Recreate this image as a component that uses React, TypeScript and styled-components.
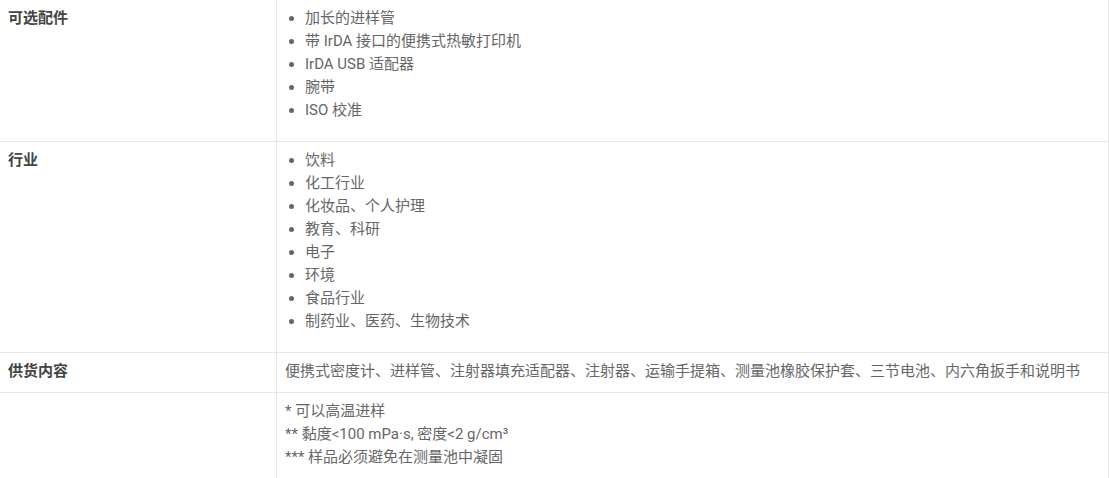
import React from "react";
import styled, { createGlobalStyle } from "styled-components";

const Global = createGlobalStyle`
  html, body { margin: 0; padding: 0; background: #fff; }
  body { font-family: Roboto, "Noto Sans CJK SC", sans-serif; font-size: 15px; color: #666; }
`;

const Table = styled.div`
  width: 1109px;
  box-sizing: border-box;
  border-right: 1px solid #e6e6e6;
`;

const Row = styled.div`
  display: grid;
  grid-template-columns: 276px 1fr;
  border-bottom: 1px solid #e6e6e6;
  &:last-child { border-bottom: none; }
`;

const Label = styled.div`
  padding: 7px 8px 9px;
  font-weight: bold;
  color: #444;
  line-height: 23px;
`;

const Value = styled.div<{ $pb?: number }>`
  border-left: 1px solid #e6e6e6;
  padding: 7px 8px ${(p) => p.$pb ?? 9}px;
  line-height: 23px;
  color: #666;
`;

const List = styled.ul`
  margin: 0 0 10px;
  padding-left: 20px;
  li::marker { color: #666; }
`;

const Line = styled.div``;

const rows: { label: string; items?: string[]; text?: string; notes?: string[] }[] = [
  {
    label: "可选配件",
    items: ["加长的进样管", "带 IrDA 接口的便携式热敏打印机", "IrDA USB 适配器", "腕带", "ISO 校准"],
  },
  {
    label: "行业",
    items: ["饮料", "化工行业", "化妆品、个人护理", "教育、科研", "电子", "环境", "食品行业", "制药业、医药、生物技术"],
  },
  {
    label: "供货内容",
    text: "便携式密度计、进样管、注射器填充适配器、注射器、运输手提箱、测量池橡胶保护套、三节电池、内六角扳手和说明书",
  },
  {
    label: "",
    notes: ["* 可以高温进样", "** 黏度<100 mPa·s, 密度<2 g/cm³", "*** 样品必须避免在测量池中凝固"],
  },
];

export default function App() {
  return (
    <>
      <Global />
      <Table>
        {rows.map((r, i) => (
          <Row key={i}>
            <Label>{r.label}</Label>
            <Value $pb={r.notes ? 20 : 9}>
              {r.items && (
                <List>
                  {r.items.map((it) => (
                    <li key={it}>{it}</li>
                  ))}
                </List>
              )}
              {r.text}
              {r.notes && r.notes.map((n) => <Line key={n}>{n}</Line>)}
            </Value>
          </Row>
        ))}
      </Table>
    </>
  );
}
